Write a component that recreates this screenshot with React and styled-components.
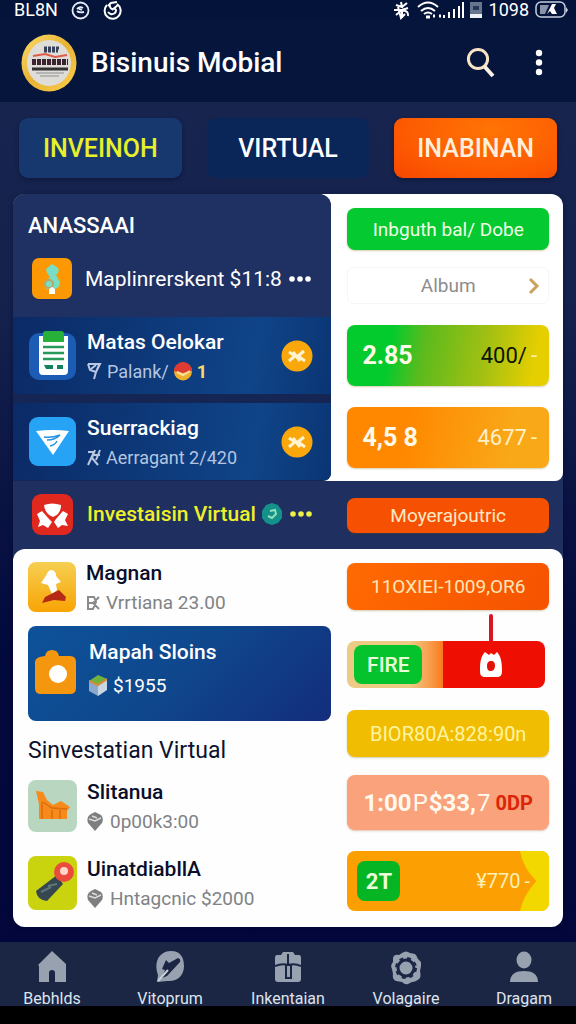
import React from 'react';
import styled, { createGlobalStyle } from 'styled-components';

const App = () => {
  return (
    <>
      <GlobalStyle />
      <Page>
        <StatusBar>
          <StatusGroup>
            <span>BL8N</span>
            <FaceIcon />
            <SwirlIcon />
          </StatusGroup>
          <StatusGroup $tight>
            <BugIcon />
            <WifiIcon />
            <SimIcon />
            <span>1098</span>
            <BatteryIcon />
          </StatusGroup>
        </StatusBar>

        <AppBar>
          <Logo />
          <AppTitle>Bisinuis Mobial</AppTitle>
          <IconButton aria-label="Search">
            <svg width="30" height="32" viewBox="0 0 30 32" fill="none">
              <circle cx="12" cy="12" r="9.6" stroke="#f8e3c4" strokeWidth="3" />
              <path d="M18.5 19.5L27 29" stroke="#fbf0e2" strokeWidth="4" />
            </svg>
          </IconButton>
          <IconButton aria-label="More">
            <svg width="8" height="28" viewBox="0 0 8 28" fill="#fff">
              <circle cx="4" cy="4" r="3.2" />
              <circle cx="4" cy="13.5" r="3.2" />
              <circle cx="4" cy="23" r="3.2" />
            </svg>
          </IconButton>
        </AppBar>

        <Tabs>
          <Tab $bg="#17386f" $color="#e8f02a" $shadow>INVEINOH</Tab>
          <Tab $bg="#0a2558" $color="#fff">VIRTUAL</Tab>
          <Tab
            $bg="radial-gradient(ellipse at 60% 20%, #ff7404, #fd5c02 60%, #f84600)"
            $color="#ffefdc"
            $shadow
          >
            INABINAN
          </Tab>
        </Tabs>

        <Main>
          <TopSection>
            <LeftPanel>
              <PanelHead>
                <PanelTitle>ANASSAAI</PanelTitle>
                <HeadRow>
                  <StatueIcon />
                  <HeadText>Maplinrerskent $11:8</HeadText>
                  <Dots color="#fff" />
                </HeadRow>
              </PanelHead>
              <DarkRow>
                <ClipboardIcon />
                <Info>
                  <Name>Matas Oelokar</Name>
                  <Sub $dark>
                    <FunnelIcon />
                    Palank/
                    <BallIcon />
                    <Count>1</Count>
                  </Sub>
                </Info>
                <CoinIcon />
              </DarkRow>
              <DarkRow>
                <PlaneIcon />
                <Info>
                  <Name>Suerrackiag</Name>
                  <Sub $dark>
                    <ToolsIcon />
                    Aerragant 2/420
                  </Sub>
                </Info>
                <CoinIcon />
              </DarkRow>
            </LeftPanel>
            <RightPanel>
              <Pill $h={42} $bg="#04c931">Inbguth bal/ Dobe</Pill>
              <SelectButton>
                <span>Album</span>
                <svg width="12" height="18" viewBox="0 0 12 18" fill="none">
                  <path d="M2 2L9 9L2 16" stroke="#c9a25c" strokeWidth="3" />
                </svg>
              </SelectButton>
              <PriceCard
                $h={61}
                $bg="linear-gradient(100deg, #04cb2d 22%, #5cba1d 38%, #a4c012 68%, #e6cf00 92%)"
              >
                <Big>2.85</Big>
                <Amount $color="#0b1405">400/<Dash>-</Dash></Amount>
              </PriceCard>
              <PriceCard $h={61} $bg="linear-gradient(100deg, #ff8800 30%, #f9a818 80%)">
                <Big>4,5 8</Big>
                <Amount $color="#fff0c8">4677<Dash>-</Dash></Amount>
              </PriceCard>
            </RightPanel>
          </TopSection>

          <MiddleBar>
            <MiddleLeft>
              <MaskIcon />
              <VirtualText>Investaisin Virtual</VirtualText>
              <BadgeIcon />
              <Dots color="#eef04a" />
            </MiddleLeft>
            <MiddleRight>
              <Pill $h={35} $bg="#f65003" $color="#ffe9c4">Moyerajoutric</Pill>
            </MiddleRight>
          </MiddleBar>

          <BottomSection>
            <BottomLeft>
              <LightRow $h={50}>
                <RunnerIcon />
                <Info>
                  <Name $light>Magnan</Name>
                  <Sub>
                    <KnotIcon />
                    Vrrtiana 23.00
                  </Sub>
                </Info>
              </LightRow>
              <BlueCard>
                <CameraIcon />
                <Info $gap={6}>
                  <Name>Mapah Sloins</Name>
                  <Sub $white>
                    <CubeIcon />
                    $1955
                  </Sub>
                </Info>
              </BlueCard>
              <SectionTitle>Sinvestatian Virtual</SectionTitle>
              <LightRow $h={52}>
                <ShoeIcon />
                <Info>
                  <Name $light>Slitanua</Name>
                  <Sub>
                    <PinIcon />
                    0p00k3:00
                  </Sub>
                </Info>
              </LightRow>
              <LightRow $h={54}>
                <TorchIcon />
                <Info>
                  <Name $light>UinatdiabllA</Name>
                  <Sub>
                    <PinIcon />
                    Hntagcnic $2000
                  </Sub>
                </Info>
              </LightRow>
            </BottomLeft>
            <BottomRight>
              <Pill $h={47} $bg="linear-gradient(110deg, #ff6a02, #f65200)" $color="#ffe6b8">
                11OXIEI-1009,OR6
              </Pill>
              <FireRow>
                <FireLeft>
                  <FireTag>FIRE</FireTag>
                </FireLeft>
                <FireRight>
                  <Needle />
                  <svg width="24" height="27" viewBox="0 0 24 27">
                    <path
                      d="M6 1L10 4L12 2L15 4L18 1C22 5 23 12 23 19C23 24 22 26 18 26H6C2 26 1 24 1 19C1 11 2 5 6 1Z"
                      fill="#fff"
                    />
                    <path d="M8 15C8 11 10 10 12 10C15 10 16 12 16 15C16 18 14 20 12 20C9 20 8 18 8 15Z" fill="#e31208" />
                  </svg>
                </FireRight>
              </FireRow>
              <Pill $h={47} $size={20} $bg="#f1bd03" $color="#fff4a0">
                BIOR80A:828:90n
              </Pill>
              <PeachCard>
                <span>1:00</span>
                <Thin>P</Thin>
                <span>$33,</span>
                <Thin>7</Thin>
                <Red>0DP</Red>
              </PeachCard>
              <TagCard>
                <GreenTag>2T</GreenTag>
                <Amount $color="#fff0b8">¥770<Dash>-</Dash></Amount>
                <Arrow viewBox="0 0 30 60" preserveAspectRatio="none">
                  <path d="M0 0H30V60H0Q3 45 17 30Q3 17 0 0Z" fill="#f3d800" />
                </Arrow>
              </TagCard>
            </BottomRight>
          </BottomSection>
        </Main>

        <BottomNav>
          <NavLink href="#home">
            <svg width="28" height="32" viewBox="0 0 28 32" fill="#98a1af">
              <path d="M14 0L28 13V31H17V22Q17 19 14 19Q11 19 11 22V31H1V15L0 14Z" />
            </svg>
            Bebhlds
          </NavLink>
          <NavLink href="#explore">
            <svg width="30" height="32" viewBox="0 0 30 32">
              <path d="M16 0C25 0 29 6 29 15C29 25 22 31 12 30L2 31L3 24C-2 10 5 0 16 0Z" fill="#98a1af" />
              <path d="M11 9L14 12L23 7Q26 8 25 11L12 25L7 27L10 19L7 18Z" fill="#1b2645" />
              <path d="M3 30L13 19" stroke="#c9d0d8" strokeWidth="2" />
            </svg>
            Vitoprum
          </NavLink>
          <NavLink href="#inventory">
            <svg width="26" height="32" viewBox="0 0 26 32">
              <path d="M2 4H6L8 1H18L20 4H24Q26 4 26 7V28Q26 31 23 31H3Q0 31 0 28V7Q0 4 2 4Z" fill="#98a1af" />
              <path d="M0 15Q7 12 13 14Q20 12 26 15M13 3V14" stroke="#1b2645" strokeWidth="2" fill="none" />
              <path d="M11 14H16V27H11Z" fill="#98a1af" stroke="#1b2645" strokeWidth="2" />
            </svg>
            Inkentaian
          </NavLink>
          <NavLink href="#settings">
            <svg width="32" height="34" viewBox="0 0 32 34">
              <path
                d="M12 2Q16-1 20 2L25 3Q27 5 28 8L31 11V15L30 20Q31 24 30 27Q26 31 22 31L18 33Q15 34 12 31L6 30Q2 28 3 23L2 18Q0 14 3 11V7Q4 3 9 4Z"
                fill="#98a1af"
              />
              <circle cx="16" cy="17" r="8" fill="#98a1af" stroke="#1b2645" strokeWidth="3" />
              <circle cx="16" cy="17" r="10" fill="none" stroke="#1b2645" strokeWidth="2" strokeDasharray="4 4" />
            </svg>
            Volagaire
          </NavLink>
          <NavLink href="#account">
            <svg width="28" height="32" viewBox="0 0 28 32" fill="#98a1af">
              <ellipse cx="14" cy="9" rx="7.5" ry="8.5" />
              <path d="M0 31C0 23 6 20 14 20C22 20 28 23 28 31Z" />
            </svg>
            Dragam
          </NavLink>
        </BottomNav>
      </Page>
    </>
  );
};

export default App;

/* status bar icons */

const FaceIcon = () => (
  <svg width="19" height="19" viewBox="0 0 19 19" fill="none" stroke="#e6ebf5">
    <circle cx="9.5" cy="9.5" r="8" strokeWidth="1.8" />
    <path d="M6 8Q9 5 12 7M6 10Q8 12 13 11M8 8L11 9" strokeWidth="1.8" />
  </svg>
);

const SwirlIcon = () => (
  <svg width="19" height="19" viewBox="0 0 19 19" fill="none" stroke="#fff" strokeWidth="2">
    <path d="M14 3A8 8 0 1 1 4 4" />
    <path d="M7 2Q6 7 9 8Q15 7 12 12Q8 15 5 11M9 9L15 4M5 5L8 2L14 1" />
  </svg>
);

const BugIcon = () => (
  <svg width="18" height="19" viewBox="0 0 18 19" fill="none" stroke="#fff" strokeWidth="2">
    <path d="M8 1L9 6L3 4M9 6L14 2M1 9H9L15 7M9 9L3 14M9 9V17M9 9Q16 10 15 15M5 6L8 17L12 13" />
  </svg>
);

const WifiIcon = () => (
  <svg width="47" height="18" viewBox="0 0 47 18" fill="none" stroke="#fff">
    <path d="M1 6Q11-3 21 6M4 10Q11 4 18 10M7 13Q11 10 15 13" strokeWidth="2" />
    <path d="M9 16H13M16 15H18M22 15H24" strokeWidth="3" />
    <path d="M27 17V14M32 17V11M37 17V8M42 17V5M46 17V1" strokeWidth="2" />
  </svg>
);

const SimIcon = () => (
  <svg width="13" height="18" viewBox="0 0 13 18">
    <path d="M0 1H12V17H0Z" fill="#67758f" />
    <path d="M0 13H12V17H0Z" fill="#eef1f6" />
    <path d="M3 5H9V9H3Z" fill="#2a3858" />
  </svg>
);

const BatteryIcon = () => (
  <svg width="34" height="18" viewBox="0 0 34 18">
    <rect x="1" y="1" width="29" height="15" rx="5" fill="none" stroke="#c6cedd" strokeWidth="1.5" />
    <path d="M5 4H14L10 13H5Z" fill="#8893a8" />
    <path d="M12 13L17 3H21L19 7L22 13H17L15 10Z" fill="#fff" />
    <path d="M31 6L33 9L31 12" fill="#c6cedd" />
  </svg>
);

/* app icons */

const Logo = () => (
  <svg width="56" height="58" viewBox="0 0 56 58">
    <defs>
      <linearGradient id="gold" x1="0" y1="0" x2="1" y2="1">
        <stop offset="0" stopColor="#fbdc6a" />
        <stop offset="0.5" stopColor="#e9b234" />
        <stop offset="1" stopColor="#fbd04a" />
      </linearGradient>
    </defs>
    <ellipse cx="28" cy="29" rx="27.5" ry="28.5" fill="url(#gold)" />
    <ellipse cx="28" cy="29" rx="22" ry="23" fill="#dfddd8" />
    <path d="M23 14H38M23 17H37" stroke="#37425a" strokeWidth="3" strokeDasharray="3 1" />
    <path d="M12 22L24 20L34 23L46 21" stroke="#e05a48" strokeWidth="2" fill="none" />
    <path d="M11 28H47" stroke="#3a2430" strokeWidth="6" strokeDasharray="4 1" />
    <path d="M11 35H47" stroke="#333" strokeWidth="3" />
    <path d="M15 39H43M19 42H38" stroke="#8b8c90" strokeWidth="1" />
  </svg>
);

const Dots = ({ color }) => (
  <DotsSvg width="26" height="8" viewBox="0 0 26 8" fill={color}>
    <circle cx="5" cy="4" r="2.8" />
    <circle cx="13" cy="4" r="2.8" />
    <circle cx="21" cy="4" r="2.8" />
  </DotsSvg>
);

const StatueIcon = () => (
  <svg width="40" height="41" viewBox="0 0 40 41">
    <rect width="40" height="41" rx="7" fill="#fb9804" />
    <path d="M14 11L20 6L26 10Q28 14 24 17L28 24Q28 30 22 31H15Q11 28 13 24L18 19L15 15Z" fill="#79dfc4" />
    <circle cx="17" cy="26" r="4" fill="none" stroke="#bba467" strokeWidth="2" />
    <path d="M17 36V31L20 29L23 31V36Z" fill="#fff" />
  </svg>
);

const ClipboardIcon = () => (
  <svg width="48" height="50" viewBox="0 0 48 50">
    <rect y="2" width="47" height="47" rx="10" fill="#1c5cb4" />
    <path d="M10 5H39V40Q39 44 35 44H14Q10 44 10 40Z" fill="#fff" />
    <path d="M14 3Q14 0 17 0H32Q35 0 35 3V11H14Z" fill="#27b03a" />
    <path d="M14 16H35M14 22H35M14 28H35" stroke="#26995a" strokeWidth="2.5" />
    <path d="M15 34H24V38H17ZM28 34H34V38H28Z" fill="#157f62" />
  </svg>
);

const PlaneIcon = () => (
  <svg width="48" height="49" viewBox="0 0 48 49">
    <rect width="47" height="49" rx="9" fill="#27a3f6" />
    <path d="M7 14Q24 12 40 14L24 38Z" fill="#fff" />
    <path d="M15 20Q23 21 31 18Q26 23 18 23M21 29Q26 28 28 24" stroke="#2590de" strokeWidth="1.5" fill="none" />
  </svg>
);

const CoinIcon = () => (
  <svg width="32" height="32" viewBox="0 0 32 32">
    <circle cx="16" cy="16" r="15.5" fill="#faa70c" />
    <path d="M8 12L14 16L8 21M23 11L17 16L24 21M12 12L19 21" stroke="#fff3d0" strokeWidth="3" fill="none" />
  </svg>
);

const FunnelIcon = () => (
  <svg width="15" height="18" viewBox="0 0 15 18" fill="none" stroke="#b9c8e0" strokeWidth="2">
    <path d="M1 2H13L9 10L7 17M1 2L3 8L9 10L12 3M4 7L9 3" />
  </svg>
);

const BallIcon = () => (
  <svg width="18" height="19" viewBox="0 0 18 19">
    <circle cx="9" cy="9.5" r="9" fill="#efb02c" />
    <path d="M0 9A9 9 0 0 1 18 9L9 11Z" fill="#de3b33" />
    <path d="M3 10L9 13L16 9" stroke="#f6e3a0" strokeWidth="2" fill="none" />
  </svg>
);

const ToolsIcon = () => (
  <svg width="14" height="18" viewBox="0 0 14 18" fill="none" stroke="#b9c8e0" strokeWidth="2">
    <path d="M1 4H7L1 17M8 2L5 10L11 17M7 7H13M13 2L9 12" />
  </svg>
);

const MaskIcon = () => (
  <svg width="41" height="41" viewBox="0 0 41 41">
    <rect width="41" height="41" rx="9" fill="#e0281f" />
    <path d="M12 11Q20 8 29 11Q29 20 21 23Q13 20 12 11Z" fill="#fff" />
    <path d="M5 20L10 17L17 25L20 28L16 34L11 31L6 33L8 27ZM36 20L31 17L24 25L22 28L26 34L30 31L36 32L33 26Z" fill="#fff" />
  </svg>
);

const BadgeIcon = () => (
  <svg width="20" height="22" viewBox="0 0 20 22">
    <path d="M4 2L10 0L16 2L20 8V15L16 20L10 22L4 20L0 15V8Z" fill="#15918c" />
    <path d="M6 13L10 15L14 11L13 7L8 8" stroke="#8fe0b8" strokeWidth="2" fill="none" />
  </svg>
);

const RunnerIcon = () => (
  <svg width="48" height="50" viewBox="0 0 48 50">
    <defs>
      <linearGradient id="amber" x1="0" y1="0" x2="0" y2="1">
        <stop offset="0" stopColor="#f6cf52" />
        <stop offset="1" stopColor="#f8a404" />
      </linearGradient>
    </defs>
    <rect width="48" height="50" rx="8" fill="url(#amber)" />
    <path d="M19 12Q20 8 24 8Q28 9 28 14L33 20L28 22L29 28L24 32L20 23L13 21Z" fill="#fff" />
    <path d="M14 41L17 35L31 28L38 35L37 39L26 38Z" fill="#b42a14" />
  </svg>
);

const KnotIcon = () => (
  <svg width="14" height="16" viewBox="0 0 14 16" fill="none" stroke="#8b8b8b" strokeWidth="2">
    <path d="M2 2H8L10 7L7 14H2ZM2 8H8M13 2L7 8L13 14" />
  </svg>
);

const CameraIcon = () => (
  <svg width="41" height="44" viewBox="0 0 41 44">
    <path
      d="M10 6Q11 0 17 0Q23 0 24 6H35Q41 6 41 12V38Q41 44 35 44H6Q0 44 0 38V12Q0 7 10 6Z"
      fill="#f5960f"
    />
    <circle cx="23" cy="24" r="9" fill="#fff" />
  </svg>
);

const CubeIcon = () => (
  <svg width="18" height="21" viewBox="0 0 18 21">
    <path d="M0 6L9 0L18 4L9 10Z" fill="#6fb23c" />
    <path d="M0 6L9 10V21L0 16Z" fill="#8aa9cc" />
    <path d="M18 4L9 10V21L18 15Z" fill="#c9d6e4" />
    <path d="M0 6L9 10L18 4" stroke="#d98a3c" strokeWidth="2" fill="none" />
  </svg>
);

const ShoeIcon = () => (
  <svg width="49" height="52" viewBox="0 0 49 52">
    <rect width="49" height="52" rx="8" fill="#b8d6c0" />
    <path d="M8 11L15 12L19 20L25 25L33 21L42 27L39 31V39H11V24Z" fill="#f68a1a" />
    <path d="M14 22V39M24 30V39M32 30V39M15 22L24 28L39 29" stroke="#dc6c0c" strokeWidth="1.5" fill="none" />
  </svg>
);

const PinIcon = () => (
  <svg width="17" height="19" viewBox="0 0 17 19">
    <path d="M8 0L14 3Q17 6 15 11L8 19L1 11Q-1 5 4 2Z" fill="#7c7e80" />
    <path d="M2 7L8 9L14 6M5 4L10 6" stroke="#dcdcdc" strokeWidth="1.5" fill="none" />
  </svg>
);

const TorchIcon = () => (
  <svg width="49" height="54" viewBox="0 0 49 54">
    <rect width="49" height="54" rx="8" fill="#c9d30e" />
    <path d="M8 35L29 19L35 28L19 45Q9 44 8 35Z" fill="#37474f" />
    <path d="M13 36L23 31M20 30L29 28" stroke="#61757c" strokeWidth="2" />
    <circle cx="36" cy="16" r="10" fill="#ea4b3c" />
    <circle cx="36" cy="15" r="4" fill="#ffd6c8" />
  </svg>
);

const GlobalStyle = createGlobalStyle`
* {
  box-sizing: border-box;
}
body {
  margin: 0;
  background: #000;
}
h1, h2, h3, p {
  margin: 0;
  font-weight: 500;
}
button {
  border: none;
  font-family: inherit;
}
`

const Page = styled.div`
  min-height: 100vh;
  background: linear-gradient(#17254f 0, #14224d 300px, #030a3c 640px, #02053a 100%);
  color: #fff;
  font-family: Roboto, "Liberation Sans", sans-serif;
`

const StatusBar = styled.header`
  display: flex;
  justify-content: space-between;
  padding: 0 7px 0 14px;
  height: 20px;
  background: #04133a;
  font-size: 18px;
  line-height: 20px;
`

const StatusGroup = styled.div`
  display: flex;
  align-items: center;
  gap: ${(props) => (props.$tight ? '6px' : '13px')};
`

const AppBar = styled.div`
  display: flex;
  align-items: center;
  gap: 14px;
  padding: 3px 28px 0 21px;
  height: 82px;
  background: #05153b;
`

const AppTitle = styled.h1`
  flex: 1;
  font-size: 28px;
  line-height: 36px;
`

const IconButton = styled.button`
  display: flex;
  padding: 0 5px;
  background: none;
  & + & {
    margin-left: 15px;
  }
`

const Tabs = styled.nav`
  display: grid;
  grid-template-columns: repeat(3, 1fr);
  gap: 25px;
  padding: 16px 19px;
`

const Tab = styled.button`
  height: 60px;
  border-radius: 9px;
  background: ${(props) => props.$bg};
  color: ${(props) => props.$color};
  font-size: 25px;
  font-weight: 500;
  padding: 0;
  box-shadow: ${(props) => (props.$shadow ? '0 2px 4px rgba(0, 0, 30, 0.3)' : 'none')};
`

const Main = styled.main`
  margin: 0 13px 15px;
  border-radius: 12px;
  background: #1e2f60;
  box-shadow: 0 1px 5px rgba(0, 0, 40, 0.4);
`

const TopSection = styled.section`
  display: grid;
  grid-template-columns: minmax(0, 11fr) minmax(0, 8fr);
  border-radius: 12px 12px 8px 8px;
  background: #fff;
`

const LeftPanel = styled.div`
  display: flex;
  flex-direction: column;
  gap: 9px;
  border-radius: 12px 12px 8px 0;
  background: #152654;
  overflow: hidden;
`

const PanelHead = styled.div`
  padding: 18px 16px 18px 15px;
  margin-bottom: -9px;
  background: #1f3162;
`

const PanelTitle = styled.h2`
  font-size: 22px;
  line-height: 28px;
`

const HeadRow = styled.div`
  display: flex;
  align-items: center;
  gap: 13px;
  padding: 18px 0 0 4px;
`

const HeadText = styled.p`
  font-size: 21px;
  font-weight: 400;
  line-height: 28px;
`

const DotsSvg = styled.svg`
  margin-left: -8px;
`

const DarkRow = styled.div`
  display: flex;
  align-items: center;
  gap: 10px;
  height: 77px;
  padding: 0 18px 0 16px;
  background: linear-gradient(100deg, #0b2a66, #0f4488 75%, #0b3574);
`

const Info = styled.div`
  display: flex;
  flex: 1;
  flex-direction: column;
  gap: ${(props) => props.$gap || 2}px;
  padding-top: 2px;
`

const Name = styled.h3`
  color: ${(props) => (props.$light ? '#0a0e2a' : '#fff')};
  font-size: 21px;
  line-height: 27px;
`

const Sub = styled.p`
  display: flex;
  align-items: center;
  gap: ${(props) => (props.$dark ? '5px' : '6px')};
  color: ${(props) => (props.$dark ? '#b4c5e0' : props.$white ? '#fff' : '#808285')};
  font-size: ${(props) => (props.$dark ? '18px' : '19px')};
  font-weight: 400;
  line-height: 27px;
`

const Count = styled.b`
  color: #f8dc6a;
`

const RightPanel = styled.div`
  display: flex;
  flex-direction: column;
  padding: 14px 14px 13px 16px;
`

const Pill = styled.button`
  width: 100%;
  height: ${(props) => props.$h}px;
  padding: 0;
  border-radius: 8px;
  background: ${(props) => props.$bg};
  color: ${(props) => props.$color || '#f2ffe6'};
  font-size: ${(props) => props.$size || 19}px;
  box-shadow: 0 1px 2px rgba(120, 90, 0, 0.3);
`

const SelectButton = styled.button`
  display: flex;
  align-items: center;
  height: 37px;
  margin: 17px 0 21px;
  padding: 0 8px 0 20px;
  border: 1px solid #f6f6f6;
  border-radius: 6px;
  background: #fff;
  color: #8d8d8d;
  font-size: 19px;
  span {
    flex: 1;
  }
`

const PriceCard = styled.div`
  display: flex;
  align-items: center;
  justify-content: space-between;
  height: ${(props) => props.$h}px;
  padding: 0 12px 0 15px;
  border-radius: 8px;
  background: ${(props) => props.$bg};
  box-shadow: 0 1px 2px rgba(120, 90, 0, 0.3);
  & + & {
    margin-top: 21px;
  }
`

const Big = styled.span`
  color: #fffbe8;
  font-size: 25px;
  font-weight: 700;
`

const Amount = styled.span`
  display: flex;
  align-items: center;
  color: ${(props) => props.$color};
  font-size: 22px;
`

const Dash = styled.span`
  margin-left: 4px;
  color: #fff3b0;
`

const MiddleBar = styled.section`
  display: grid;
  grid-template-columns: minmax(0, 11fr) minmax(0, 8fr);
  align-items: center;
  height: 68px;
`

const MiddleLeft = styled.div`
  display: flex;
  align-items: center;
  gap: 6px;
  padding: 0 0 2px 19px;
  svg:first-child {
    margin-right: 8px;
  }
  ${DotsSvg} {
    margin-left: 0;
  }
`

const VirtualText = styled.h2`
  color: #eef02a;
  font-size: 21px;
`

const MiddleRight = styled.div`
  padding: 0 14px 0 16px;
`

const BottomSection = styled.section`
  display: grid;
  grid-template-columns: minmax(0, 11fr) minmax(0, 8fr);
  border-radius: 12px;
  background: #fdfefd;
`

const BottomLeft = styled.div`
  padding: 13px 0 17px 15px;
`

const LightRow = styled.div`
  display: flex;
  align-items: center;
  gap: 10px;
  height: ${(props) => props.$h}px;
  & + & {
    margin-top: 24px;
  }
`

const BlueCard = styled.div`
  display: flex;
  align-items: center;
  gap: 13px;
  height: 95px;
  margin: 14px 0 15px;
  padding: 0 7px 12px;
  border-radius: 8px;
  background: linear-gradient(135deg, #0d529a, #0f478c 50%, #132d7c);
  svg:first-child {
    margin-top: 9px;
  }
  p svg:first-child {
    margin-top: 0;
  }
`

const SectionTitle = styled.h2`
  margin-bottom: 14px;
  color: #0d1230;
  font-size: 23px;
  font-weight: 400;
  line-height: 30px;
`

const BottomRight = styled.div`
  padding: 14px 14px 16px 16px;
`

const FireRow = styled.div`
  display: grid;
  grid-template-columns: 96fr 102fr;
  height: 46px;
  margin: 31px 4px 23px 0;
`

const FireLeft = styled.div`
  padding: 4px 7px;
  border-radius: 8px 0 0 8px;
  background: linear-gradient(90deg, #eccb84 65%, #f9a050 85%, #fb7a1c);
`

const FireTag = styled.button`
  width: 68px;
  height: 39px;
  padding: 0;
  border-radius: 8px;
  background: #05c32c;
  color: #eaffd8;
  font-size: 21px;
  font-weight: 500;
`

const FireRight = styled.div`
  position: relative;
  display: flex;
  align-items: center;
  justify-content: center;
  padding-right: 6px;
  border-radius: 0 8px 8px 0;
  background: #ee0f02;
`

const Needle = styled.span`
  position: absolute;
  bottom: 100%;
  width: 4px;
  height: 27px;
  border-radius: 2px 2px 0 0;
  background: #dc1420;
`

const PeachCard = styled.div`
  display: flex;
  align-items: center;
  justify-content: center;
  height: 55px;
  margin: 18px 0 21px;
  border-radius: 8px;
  background: #f9a27b;
  color: #fffaf0;
  font-size: 24px;
  font-weight: 700;
  box-shadow: 0 1px 2px rgba(160, 60, 0, 0.3);
`

const Thin = styled.span`
  margin: 0 1px;
  font-weight: 400;
`

const Red = styled.span`
  margin-left: 4px;
  color: #de2408;
  font-size: 20px;
`

const TagCard = styled.div`
  position: relative;
  display: flex;
  align-items: center;
  justify-content: space-between;
  height: 60px;
  padding: 0 19px 0 10px;
  border-radius: 8px;
  background: #fb9f02;
  overflow: hidden;
  ${Amount} {
    position: relative;
    z-index: 1;
    font-size: 20px;
  }
`

const GreenTag = styled.button`
  width: 43px;
  height: 40px;
  padding: 0;
  border-radius: 8px;
  background: #06b524;
  color: #eaffd8;
  font-size: 22px;
  font-weight: 700;
`

const Arrow = styled.svg`
  position: absolute;
  top: 0;
  right: 0;
  width: 29px;
  height: 100%;
`

const BottomNav = styled.nav`
  display: flex;
  justify-content: space-between;
  height: 82px;
  padding: 9px 14px 0;
  background: linear-gradient(#1b2645 64px, #000 64px);
`

const NavLink = styled.a`
  display: flex;
  flex-direction: column;
  align-items: center;
  justify-content: space-between;
  width: 76px;
  height: 58px;
  color: #dfe4ec;
  font-size: 16px;
  line-height: 20px;
  text-decoration: none;
`
